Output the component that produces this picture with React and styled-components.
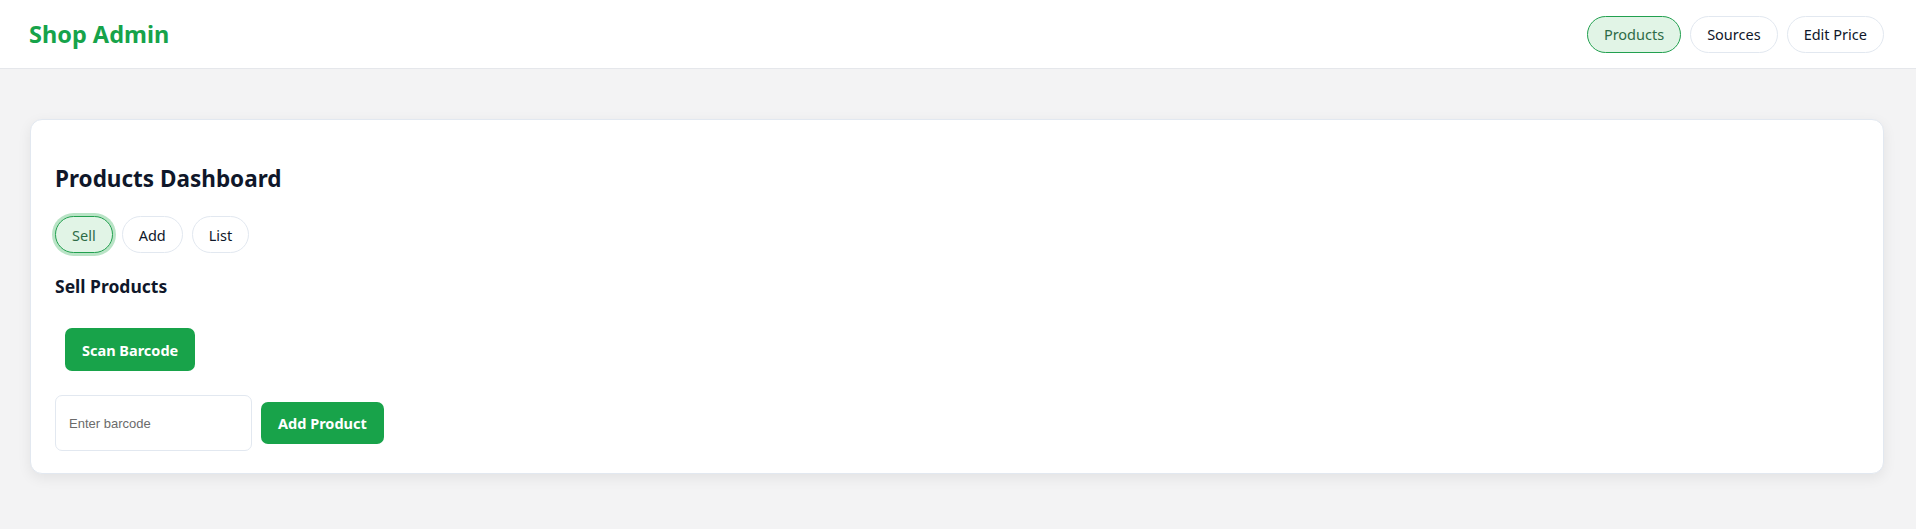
import React from "react";
import styled, { createGlobalStyle } from "styled-components";

const GlobalStyle = createGlobalStyle`
  body {
    margin: 0;
    background: #f3f3f4;
    font-family: "Noto Sans", "Open Sans", sans-serif;
    color: #0f172a;
  }
`;

const Header = styled.header`
  height: 68px;
  background: #ffffff;
  border-bottom: 1px solid #e5e7eb;
  display: flex;
  align-items: center;
  justify-content: space-between;
  padding: 0 32px 0 29px;
`;

const Logo = styled.h1`
  margin: 0;
  font-size: 23.5px;
  font-weight: 700;
  color: #16a34a;
`;

const Nav = styled.nav`
  display: flex;
  gap: 9px;
`;

const Pill = styled.button`
  font-family: inherit;
  height: 37px;
  padding: 0 ${(p) => p.$px || 16}px;
  border-radius: 999px;
  font-size: 14.5px;
  font-weight: 400;
  cursor: pointer;
  border: 1px solid ${(p) => (p.$active ? "#22a04f" : "#e2e8f0")};
  background: ${(p) => (p.$active ? "#e1f4e6" : "#ffffff")};
  color: ${(p) => (p.$active ? "#2e6b47" : "#0f172a")};
  box-shadow: ${(p) => (p.$ring ? "0 0 0 3px #b9e4c6" : "none")};
`;

const Main = styled.main`
  padding: 50px 32px 40px 30px;
`;

const Card = styled.section`
  background: #ffffff;
  border: 1px solid #e2e8f0;
  border-radius: 12px;
  box-shadow: 0 4px 14px rgba(0, 0, 0, 0.07);
  padding: 43px 24px 22px;
`;

const Title = styled.h2`
  margin: 0 0 22px;
  font-size: 22.5px;
  font-weight: 700;
`;

const Tabs = styled.div`
  display: flex;
  gap: 9px;
`;

const Section = styled.h3`
  margin: 21px 0 30px;
  font-size: 17.5px;
  font-weight: 700;
`;

const ScanWrap = styled.div`
  padding: 0 10px;
`;

const Primary = styled.button`
  font-family: inherit;
  height: ${(p) => p.$h || 42}px;
  padding: 0 17px;
  border: none;
  border-radius: 7px;
  background: #18a34a;
  color: #ffffff;
  font-size: 14.5px;
  font-weight: 700;
  cursor: pointer;
`;

const Row = styled.div`
  display: flex;
  align-items: center;
  gap: 9px;
  margin-top: 24px;
`;

const Input = styled.input`
  width: 197px;
  height: 56px;
  box-sizing: border-box;
  border: 1px solid #e2e8f0;
  border-radius: 7px;
  padding: 0 13px;
  font-family: "Liberation Sans", Arial, sans-serif;
  font-size: 13px;
  color: #0f172a;
  &::placeholder {
    color: #6b6b6b;
  }
`;

export default function App() {
  return (
    <>
      <GlobalStyle />
      <Header>
        <Logo>Shop Admin</Logo>
        <Nav>
          <Pill $active>Products</Pill>
          <Pill>Sources</Pill>
          <Pill>Edit Price</Pill>
        </Nav>
      </Header>
      <Main>
        <Card>
          <Title>Products Dashboard</Title>
          <Tabs>
            <Pill $active $ring>Sell</Pill>
            <Pill>Add</Pill>
            <Pill>List</Pill>
          </Tabs>
          <Section>Sell Products</Section>
          <ScanWrap>
            <Primary $h={43}>Scan Barcode</Primary>
          </ScanWrap>
          <Row>
            <Input placeholder="Enter barcode" />
            <Primary $h={42}>Add Product</Primary>
          </Row>
        </Card>
      </Main>
    </>
  );
}
